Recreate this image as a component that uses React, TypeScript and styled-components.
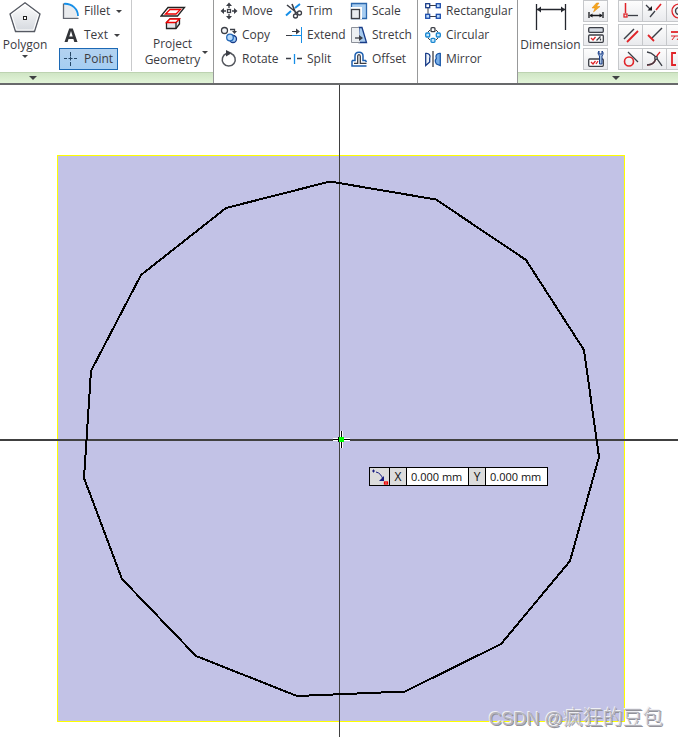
import React from "react";
import styled, { createGlobalStyle } from "styled-components";

const GlobalStyle = createGlobalStyle`
  * { box-sizing: border-box; }
  body { margin: 0; background: #fff; }
  button, input { font: inherit; color: inherit; }
`;

const Page = styled.div`
  display: flex;
  flex-direction: column;
  min-height: 100vh;
  overflow: hidden;
  font-family: "Open Sans", "Noto Sans", sans-serif;
  font-size: 12px;
  line-height: 16px;
  color: #3b3b3f;
`;

const Ribbon = styled.header`
  display: flex;
  border-bottom: 2px solid #68696b;
  background: #fff;
  overflow: hidden;
`;

const Panel = styled.section<{ $grow?: boolean }>`
  display: flex;
  flex-direction: column;
  flex: ${(p) => (p.$grow ? "1 0 0" : "none")};
  min-width: 0;
  min-height: 83px;
  border-right: ${(p) => (p.$grow ? "none" : "1px solid #98999a")};
`;

const PanelBody = styled.div`
  display: flex;
  align-items: flex-start;
  height: 72px;
`;

const PanelFooter = styled.button<{ $arrow: number }>`
  display: flex;
  align-items: center;
  height: 11px;
  margin: 0;
  padding: 0 0 0 ${(p) => p.$arrow}px;
  border: 0;
  border-top: 1px solid #bdd3b1;
  background: linear-gradient(#d0e5c5, #e2f4d8);
`;

const Caret = styled.span<{ $big?: boolean }>`
  flex: none;
  width: 0;
  height: 0;
  border: ${(p) => (p.$big ? 4 : 3)}px solid transparent;
  border-top-color: #3f4043;
  border-bottom: 0;
`;

const BigTool = styled.button<{ $width: number; $pad: number }>`
  display: flex;
  flex: none;
  flex-direction: column;
  align-items: center;
  width: ${(p) => p.$width}px;
  padding: ${(p) => p.$pad}px 0 0;
  border: 0;
  background: none;
  white-space: nowrap;
`;

const BigLabel = styled.span`
  padding: 3px 0;
  line-height: 15px;
`;

const SplitLabel = styled.span`
  display: grid;
  grid-template-columns: 6px auto 6px;
  align-items: center;
  column-gap: 2px;
  padding-top: 5px;
`;

const StackedText = styled.span`
  grid-column: 2;
  text-align: center;
  line-height: 16px;
`;

const ToolGrid = styled.div<{ $columns: number; $width: number; $left: number; $right?: number }>`
  display: grid;
  grid-template-columns: repeat(${(p) => p.$columns}, ${(p) => p.$width}px);
  grid-auto-rows: 22px;
  row-gap: 2px;
  padding: 0 ${(p) => p.$right ?? 0}px 0 ${(p) => p.$left}px;
`;

const Tool = styled.button<{ $active?: boolean }>`
  display: flex;
  align-items: center;
  justify-self: start;
  gap: 5px;
  height: 22px;
  padding: 0 3px;
  border: 1px solid ${(p) => (p.$active ? "#1c69b5" : "transparent")};
  background: ${(p) => (p.$active ? "linear-gradient(#b3d2f0, #a5cef2)" : "none")};
  white-space: nowrap;
`;

const ToolLabel = styled.span`
  padding-right: 1px;
`;

const Divider = styled.div`
  width: 1px;
  height: 71px;
  margin-left: 13px;
  background: #c9cacc;
`;

const IconGrid = styled.div<{ $columns: number; $joined?: boolean }>`
  display: grid;
  flex: none;
  grid-template-columns: repeat(${(p) => p.$columns}, 24px);
  grid-auto-rows: 22px;
  row-gap: 2px;
  margin-left: ${(p) => (p.$joined ? 11 : 0)}px;
`;

const IconButton = styled.button`
  display: flex;
  align-items: center;
  justify-content: center;
  padding: 0;
  margin-right: -1px;
  border: 1px solid #c6c8cb;
  background: linear-gradient(#fdfdfd, #e9eaed);
`;

const Canvas = styled.main`
  position: relative;
  display: flex;
  flex: 1;
  min-height: 400px;
  overflow: hidden;
`;

const Scene = styled.svg`
  flex: 1;
  width: 100%;
  height: calc(100vh - 85px);
  overflow: visible;
`;

const HeadsUp = styled.form`
  position: absolute;
  left: calc(50% + 30px);
  top: calc(50% + 56px);
  display: flex;
  height: 19px;
  border: 1px solid #000;
  background: #000;
  gap: 1px;
  color: #111;
`;

const HeadsUpCell = styled.label`
  display: flex;
  align-items: center;
  justify-content: center;
  width: 16px;
  background: #dcdcdc;
  font-size: 12px;
`;

const HeadsUpIcon = styled(HeadsUpCell).attrs({ as: "span" })`
  width: 19px;
`;

const Coordinate = styled.input`
  width: 61px;
  padding: 0 0 0 4px;
  border: 0;
  outline: 0;
  background: #fff;
  font-size: 11px;
`;

const Watermark = styled.div`
  position: absolute;
  right: 15px;
  bottom: 4px;
  display: flex;
  align-items: baseline;
  font: 20px/28px "Liberation Sans", "Noto Sans CJK SC", sans-serif;
  font-weight: 300;
  color: #b4b4bb;
  text-shadow: -1px -1px 0 #f0f0f4, 1px 1px 0 #92929a;
  white-space: pre;
`;

const WatermarkLatin = styled.span`
  font-size: 18px;
`;

const K = "#3b3e46";
const B = "#168fe8";
const N = "#173b87";
const R = "#e02328";

const Glyph = ({ children, size = 16 }: { children: React.ReactNode; size?: number }) => (
  <svg width={size} height={size} viewBox={`0 0 ${size} ${size}`} fill="none" stroke={K} strokeWidth="1.3" overflow="visible" aria-hidden="true">
    {children}
  </svg>
);

const icons: Record<string, React.ReactNode> = {
  Fillet: (
    <>
      <path d="M1 1C9 0 15 6 15 14.5H1z" fill="#e9ebee" stroke="none" />
      <path d="M.5 .5V15.3H15.5" stroke="#646872" />
      <path d="M1 .8C9 .3 15 6 15 13" stroke={B} strokeWidth="1.8" />
    </>
  ),
  Text: <path d="M1.5 15 6.2 1.5h3.6L14.5 15h-3.2l-.9-3H5.500l-.9 3zM6.300 9.500h3.400L8 4z" fill="#333539" stroke="none" fillRule="evenodd" />,
  Point: <path d="M7.500 1v4M7.500 11v4M1 7.500h3M11 7.500h3M5.500 7.500h4M7.500 5.500v4" stroke="#254766" strokeWidth="1" />,
  Move: (
    <>
      <rect x="6.500" y="6.500" width="3" height="3" />
      <path d="M8 5V2M8 11v3M5 8H2M11 8h3" />
      <path d="M8-.5 11 3H5zM8 16.500 11 13H5zM-.5 8 3 5v6zM16.500 8 13 5v6z" fill={K} stroke="none" />
    </>
  ),
  Copy: (
    <>
      <circle cx="3.500" cy="3.500" r="3" fill="#f4f6f8" />
      <path d="M9 2.500h4.500V5" />
      <path d="M11 4h5l-2.500 3z" fill={K} stroke="none" />
      <circle cx="12" cy="12" r="3.500" fill="#9fcaf4" stroke={N} />
      <circle cx="9" cy="10.500" r="3.300" fill="#b9dafa" stroke="#2368b8" />
    </>
  ),
  Rotate: (
    <>
      <path d="M10 2.500A6.500 6.500 0 1 1 5.500 2.500" stroke="#53565d" strokeWidth="1.500" />
      <path d="M5-1 11 2 5 5.500z" fill={K} stroke="none" />
    </>
  ),
  Trim: (
    <>
      <path d="M0 12.500 5 8M9 5l5-4" stroke={B} strokeWidth="2" />
      <path d="M1 2 11 10M6 1l4 10" strokeWidth="1.600" />
      <circle cx="9.500" cy="13" r="2" />
      <circle cx="13.500" cy="10" r="2" />
    </>
  ),
  Extend: (
    <>
      <path d="M6 8.500H15" stroke={B} strokeWidth="1" />
      <path d="M15.500 0v16" stroke={B} strokeWidth="1" />
      <path d="M0 8.500h6M6 4.500h5" strokeWidth="1" />
      <path d="M10 1.500l4 3-4 3z" fill={K} stroke="none" />
    </>
  ),
  Split: (
    <>
      <path d="M0 7.500h5M11 7.500h5" />
      <path d="M8.500 3v10" stroke={B} />
    </>
  ),
  Scale: (
    <>
      <path d="M.5.500h15v15h-15z" fill="#a7cdf1" stroke="#2a67ad" />
      <path d="M0 5H10V16" stroke="#fff" strokeWidth="2" />
      <rect x=".5" y="6.500" width="8" height="9" fill="#e7ebf0" />
    </>
  ),
  Stretch: (
    <>
      <path d="M8 .5h3L15.500 15.500H8z" fill="#a8cbed" stroke={N} />
      <path d="M8 .5H.5v15H9z" fill="#eceff2" stroke="none" />
      <path d="M8 .5H.5v15H9" stroke="#8c9099" strokeWidth="1" />
      <path d="M4 11h5" />
      <path d="M8 8l4 3-4 3z" fill={K} stroke="none" />
    </>
  ),
  Offset: (
    <>
      <path d="M1 9.500H4V5C4 0 12 0 12 5v4.500h2.500L15.500 11M1 9.500V15h14.500" stroke="#1c5fb0" strokeWidth="1.500" />
      <path d="M3 12.300H6.700V5.500c0-2.500 2.600-2.500 2.600 0v6.800h6.200" />
    </>
  ),
  Rectangular: (
    <>
      <path d="M3 5v6M5 2.500h6M5 13.500h6" strokeWidth="1" />
      <g fill="#b9d9fa" stroke="#1d4caa">
        <rect x=".7" y=".7" width="4" height="4" fill="#fff" stroke={N} />
        <rect x="11.300" y=".7" width="4" height="4" />
        <rect x=".7" y="11.300" width="4" height="4" />
        <rect x="11.300" y="11.300" width="4" height="4" />
      </g>
    </>
  ),
  Circular: (
    <>
      <path d="M5 3 3 5M11 3l2 2M3 11l2 2M13 11l-2 2" strokeWidth="1" />
      <g fill="#c1e4fb" stroke="#1785cf">
        <rect x="6" y=".7" width="4" height="4" rx="1" fill="#fff" stroke={K} />
        <rect x=".7" y="6" width="4" height="4" rx="1" />
        <rect x="11.300" y="6" width="4" height="4" rx="1" />
        <rect x="6" y="11.300" width="4" height="4" rx="1" />
      </g>
    </>
  ),
  Mirror: (
    <>
      <path d="M.7 2.500C4 2 6 4.500 4.700 7.500V11L.7 14.500z" fill="#edf3f9" stroke={N} />
      <path d="M15.300 2.500C12 2 10 4.500 11.300 7.500 10 9 10 11 11.500 13l3.800 1.500z" fill="#78aee7" stroke="#1a57a8" />
      <path d="M8 0v16" />
    </>
  ),
  "Automatic dimension": (
    <>
      <path d="M8.500 0 4 5h3L5.500 9 12 3.500H8.500L11 0z" fill="#f6a71b" stroke="#e18612" strokeWidth=".5" />
      <path d="M1 9v6M15 9v6M2 12.500h12" stroke="#15171b" />
      <path d="M1.500 12.500l3-2v4zM14.500 12.500l-3-2v4z" fill="#15171b" stroke="none" />
    </>
  ),
  "Show constraints": (
    <>
      <rect x=".7" y=".7" width="14.600" height="4.600" rx="1" fill="#d4dae2" />
      <rect x=".7" y="8" width="14.600" height="7.300" rx="1" fill="#fff" />
      <path d="M3 11l2 2 2.500-3" stroke={R} />
      <path d="M8.500 13.500l4-4M12.500 13.500v-2" />
    </>
  ),
  "Constraint settings": (
    <>
      <rect x=".7" y="8" width="14.600" height="7.300" rx="1" fill="#fff" />
      <path d="M3 11l2 2 2.500-3M8 13l2-3" stroke={R} />
      <path d="M11.500 5C9.500 3 10 1 11 0v3h3V0c1.500 1 1.500 3.500 0 5v8h-2.500z" fill="#a9c4e2" stroke={N} strokeWidth="1" />
    </>
  ),
  Coincident: (
    <>
      <path d="M2.500 0v10" stroke={R} strokeWidth="1.500" />
      <path d="M5 12.500h10" />
      <rect x="1" y="11" width="3" height="3" stroke={R} />
    </>
  ),
  Collinear: (
    <>
      <path d="M-1 2l4 4" />
      <path d="M5 7.500V3L.5 7.500z" fill="#15171b" stroke="none" />
      <path d="M3 14l5-6" />
      <path d="M9 7l5-6" stroke={R} strokeWidth="1.600" />
    </>
  ),
  Concentric: (
    <>
      <circle cx="8" cy="8" r="7" stroke={R} />
      <circle cx="8" cy="8" r="3.500" />
    </>
  ),
  Parallel: (
    <>
      <path d="M1 12 11 2" strokeWidth="1.500" />
      <path d="M4 15 15 4" stroke={R} strokeWidth="1.800" />
    </>
  ),
  Perpendicular: (
    <>
      <path d="M5 11 15 1" strokeWidth="1.500" />
      <path d="M1 8l6 6" stroke={R} strokeWidth="1.800" />
    </>
  ),
  Horizontal: (
    <>
      <path d="M0 5h16" stroke={R} strokeWidth="1.800" />
      <path d="M0 9h16M1 13l3-4M6 13l3-4M11 13l3-4" stroke={R} strokeWidth="1" />
    </>
  ),
  Tangent: (
    <>
      <circle cx="6" cy="10.500" r="4.500" stroke={R} strokeWidth="1.600" />
      <path d="M5 1l10 10" />
    </>
  ),
  Smooth: (
    <>
      <path d="M0 14C5 14 8 11 9 7c1-3 3-5 4-6" stroke={R} />
      <path d="M0 1C7 2 9 6 15 15" stroke={K} />
      <path d="M0 14C5 14 8 11 9 7" stroke={K} />
      <circle cx="9" cy="7" r="1.300" fill="#fff" />
    </>
  ),
  Symmetric: (
    <>
      <path d="M5 2H1v12h4M11 2h4v12h-4" stroke={R} strokeWidth="1.800" />
      <path d="M8 1v14" strokeDasharray="4 2" />
    </>
  ),
};

const modify = ["Move", "Trim", "Scale", "Copy", "Extend", "Stretch", "Rotate", "Split", "Offset"];
const pattern = ["Rectangular", "Circular", "Mirror"];
const dimensionTools = ["Automatic dimension", "Show constraints", "Constraint settings"];
const constraints = ["Coincident", "Collinear", "Concentric", "Parallel", "Perpendicular", "Horizontal", "Tangent", "Smooth", "Symmetric"];

const RibbonTool = ({ name, caret, active }: { name: string; caret?: boolean; active?: boolean }) => (
  <Tool type="button" $active={active}>
    <Glyph>{icons[name]}</Glyph>
    <ToolLabel>{name}</ToolLabel>
    {caret && <Caret />}
  </Tool>
);

const IconTool = ({ name }: { name: string }) => (
  <IconButton type="button" aria-label={name}>
    <Glyph>{icons[name]}</Glyph>
  </IconButton>
);

export default function App() {
  return (
    <Page>
      <GlobalStyle />
      <Ribbon>
        <Panel>
          <PanelBody>
            <BigTool type="button" $width={50} $pad={2}>
              <svg width="32" height="32" viewBox="0 0 32 32" aria-hidden="true">
                <defs>
                  <linearGradient id="metal" x2="0" y2="1">
                    <stop stopColor="#fff" />
                    <stop offset="1" stopColor="#d4d8de" />
                  </linearGradient>
                </defs>
                <path d="M16 .8 31 12 25.500 29.500H6.500L1 12z" fill="url(#metal)" stroke="#555962" strokeWidth="1.300" />
                <path d="M16 2.500 29.300 12.500 24.500 28H7.500L2.700 12.500z" fill="none" stroke="#fff" />
                <rect x="14.500" y="14.500" width="3" height="3" fill="#fff" stroke="#222" />
              </svg>
              <BigLabel>Polygon</BigLabel>
              <Caret />
            </BigTool>
            <ToolGrid $columns={1} $width={59} $left={9}>
              <RibbonTool name="Fillet" caret />
              <RibbonTool name="Text" caret />
              <RibbonTool name="Point" active />
            </ToolGrid>
            <Divider />
            <BigTool type="button" $width={81} $pad={5}>
              <svg width="26" height="26" viewBox="0 0 26 26" fill="none" strokeWidth="1.300" aria-hidden="true">
                <path d="M8 2.500H24.500L17.500 11H1z" fill="#fff" stroke="#222" />
                <path d="M10 4.500H20.500L16 9H5.500z" stroke="#f00000" />
                <path d="M6.500 17.500 10 14h9.500v5L16 23.500H6.500z" fill="#e3e5e9" stroke="#222" />
                <path d="M6.500 17.500 10 14h9.500L16 17.500z" fill="#fff" stroke="#f00000" />
                <path d="M16 17.500v6" stroke="#222" />
              </svg>
              <SplitLabel>
                <StackedText>Project<br />Geometry</StackedText>
                <Caret />
              </SplitLabel>
            </BigTool>
          </PanelBody>
          <PanelFooter type="button" aria-label="Create panel options" $arrow={29}><Caret $big /></PanelFooter>
        </Panel>
        <Panel>
          <ToolGrid $columns={3} $width={65} $left={3} $right={5}>
            {modify.map((name) => <RibbonTool key={name} name={name} />)}
          </ToolGrid>
        </Panel>
        <Panel>
          <ToolGrid $columns={1} $width={96} $left={3}>
            {pattern.map((name) => <RibbonTool key={name} name={name} />)}
          </ToolGrid>
        </Panel>
        <Panel $grow>
          <PanelBody>
            <BigTool type="button" $width={65} $pad={2}>
              <svg width="32" height="32" viewBox="0 0 32 32" aria-hidden="true">
                <path d="M1.500 2v26M30.500 2v26M2 7.500h28" stroke="#24272e" strokeWidth="1.300" />
                <path d="M2 7.500l4-3v6zM30 7.500l-4-3v6z" fill="#24272e" />
              </svg>
              <BigLabel>Dimension</BigLabel>
            </BigTool>
            <IconGrid $columns={1}>
              {dimensionTools.map((name) => <IconTool key={name} name={name} />)}
            </IconGrid>
            <IconGrid $columns={3} $joined>
              {constraints.map((name) => <IconTool key={name} name={name} />)}
            </IconGrid>
          </PanelBody>
          <PanelFooter type="button" aria-label="Constrain panel options" $arrow={94}><Caret $big /></PanelFooter>
        </Panel>
      </Ribbon>
      <Canvas>
        <Scene viewBox="0 0 678 652" role="img" aria-label="Sketch with a fifteen-sided polygon">
          <rect x="57" y="70" width="568" height="567" fill="#ffff00" />
          <rect x="58" y="71" width="566" height="565" fill="#c2c2e6" />
          <g shapeRendering="crispEdges" fill="#404040">
            <rect x="339" y="-1000" width="1" height="2652" />
            <rect x="-2000" y="354" width="4678" height="2" />
          </g>
          <polygon
            points="330,96.500 436,114.500 526,175 584,265 599,372 570,476 501,559 405,606.500 297,611 196,571 122,494 84,393 91,286 141,190 226,123"
            fill="none"
            stroke="#000"
            strokeWidth="2"
            shapeRendering="crispEdges"
          />
          <g shapeRendering="crispEdges">
            <path d="M333 354.500h17M341.500 346v17" stroke="#fff" strokeWidth="3" />
            <path d="M333 354.500h17M341.500 346v17" stroke="#000" />
            <rect x="338" y="352" width="6" height="5" fill="#000" />
            <rect x="339" y="352" width="5" height="5" fill="#00ff00" />
          </g>
        </Scene>
        <HeadsUp onSubmit={(e) => e.preventDefault()}>
          <HeadsUpIcon>
            <Glyph>
              <path d="M0 2h3M1.500.500v3M4 3c4 1 5 3 7 7" stroke="#171b80" strokeWidth="1" />
              <path d="M12 7v5H7z" fill="#171b80" stroke="none" />
              <rect x="12.500" y="13" width="3" height="2" stroke="#f00000" />
            </Glyph>
          </HeadsUpIcon>
          <HeadsUpCell htmlFor="coord-x">X</HeadsUpCell>
          <Coordinate id="coord-x" defaultValue="0.000 mm" />
          <HeadsUpCell htmlFor="coord-y">Y</HeadsUpCell>
          <Coordinate id="coord-y" defaultValue="0.000 mm" />
        </HeadsUp>
        <Watermark><WatermarkLatin>CSDN @</WatermarkLatin>疯狂的豆包</Watermark>
      </Canvas>
    </Page>
  );
}
